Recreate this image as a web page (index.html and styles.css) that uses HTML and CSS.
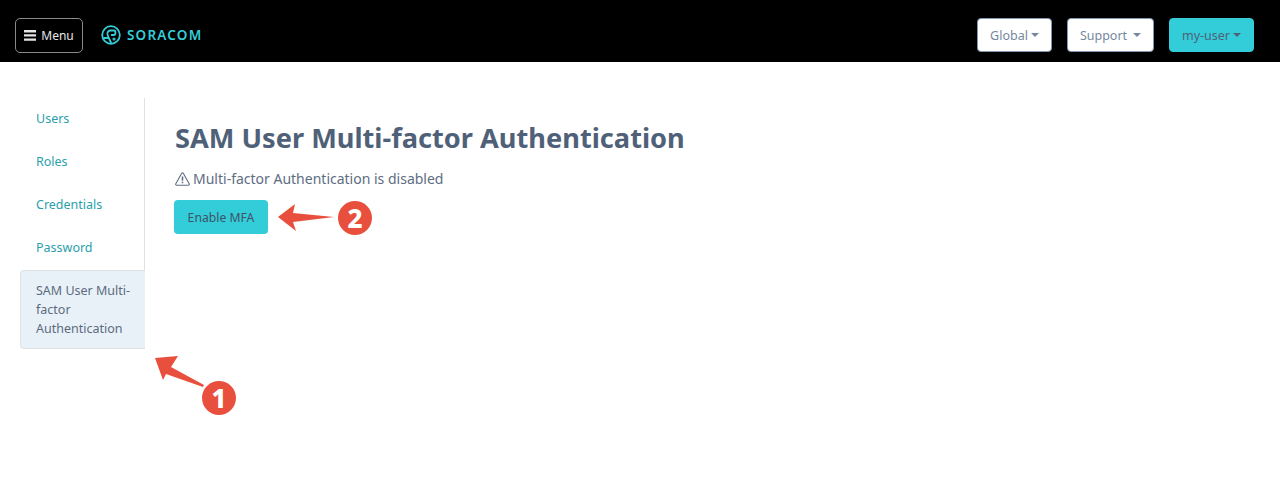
FILE: index.html
```html
<!DOCTYPE html>
<html lang="en">
<head>
    <meta charset="UTF-8">
    <title>SAM User Multi-factor Authentication</title>
    <link rel="stylesheet" href="styles.css">
</head>
<body>

<!-- Top bar -->
<header class="navbar">
    <div class="navbar-left">
        <button class="btn-menu">
            <svg class="menu-icon" width="12" height="11" viewBox="0 0 12 11"><path d="M0 0h12v2.400H0zM0 4.200h12v2.400H0zM0 8.400h12v2.400H0z" fill="#e6e6e6"/></svg>
            Menu
        </button>
        <div class="logo">
            <svg width="20" height="20" viewBox="0 0 20 20" fill="none" stroke="#33cdd9" stroke-width="1.800">
                <circle cx="10" cy="10" r="8.800"/>
                <path d="M2.500 13h5.300L6.500 9.500C6 7 7.500 5.500 9.500 5.500h3.300c2.200 0 2.200 4.500 0 4.500H10"/>
                <path d="M7.800 13l2.400 5"/>
                <circle cx="13" cy="14" r="1" stroke-width="1.200"/>
            </svg>
            <span class="logo-text">SORACOM</span>
        </div>
    </div>
    <div class="navbar-right">
        <button class="btn-nav btn-global">Global<span class="caret"></span></button>
        <button class="btn-nav btn-support">Support<span class="caret"></span></button>
        <button class="btn-nav btn-user">my-user<span class="caret"></span></button>
    </div>
</header>

<div class="layout">
    <!-- Side tabs -->
    <ul class="side-tabs">
        <li><a href="#">Users</a></li>
        <li><a href="#">Roles</a></li>
        <li><a href="#">Credentials</a></li>
        <li><a href="#">Password</a></li>
        <li class="active"><a href="#">SAM User Multi-factor Authentication</a></li>
    </ul>

    <main class="content">
        <h1>SAM User Multi-factor Authentication</h1>
        <p class="status">
            <svg width="15" height="14" viewBox="0 0 15 14" fill="none" stroke="#5d6d82" stroke-width="1.100">
                <path d="M6.600 1.400a1 1 0 0 1 1.800 0l5.800 10.300a1 1 0 0 1-.9 1.500H1.700a1 1 0 0 1-.9-1.500z" stroke-linejoin="round"/>
                <path d="M7.500 4.500v4.200M7.500 9.800v1.500" stroke-width="1.500"/>
            </svg>
            Multi-factor Authentication is disabled
        </p>
        <button class="btn-primary">Enable MFA</button>
    </main>
</div>

<!-- Annotations drawn over the page -->
<svg class="arrow arrow-one" width="50" height="32" viewBox="0 0 50 32">
    <path d="M0 3L23 1 16 12 49 30 48 32 11 19 8 25z" fill="#e94f3d"/>
</svg>
<div class="badge badge-one">1</div>
<svg class="arrow arrow-two" width="56" height="28" viewBox="0 0 56 28">
    <path d="M0 13L17 0 15 9 56 13 15 18 18 27z" fill="#e94f3d"/>
</svg>
<div class="badge badge-two">2</div>

</body>
</html>
```

FILE: styles.css
```css
* {
    margin: 0;
    padding: 0;
    box-sizing: border-box;
}

body {
    font-family: 'Noto Sans', sans-serif;
    background-color: #fff;
    color: #4f6178;
    font-size: 14px;
    position: relative;
    height: 500px;
    overflow: hidden;
}

button {
    font-family: inherit;
    cursor: pointer;
}

/* Top bar */
.navbar {
    height: 62px;
    background-color: #000;
    display: flex;
    justify-content: space-between;
    align-items: center;
    padding: 8px 26px 0 15px;
}

.navbar-left {
    display: flex;
    align-items: center;
    gap: 18px;
}

.btn-menu {
    height: 35px;
    width: 68px;
    background: none;
    border: 1px solid #8a8a8a;
    border-radius: 5px;
    color: #e6e6e6;
    font-size: 12px;
    display: flex;
    align-items: center;
    justify-content: center;
    gap: 5px;
}

.logo {
    display: flex;
    align-items: center;
    gap: 6px;
}

.logo-text {
    color: #33cdd9;
    font-size: 13.500px;
    font-weight: 600;
    letter-spacing: 1.200px;
}

.navbar-right {
    display: flex;
    gap: 15px;
}

.btn-nav {
    height: 34px;
    border: 1px solid #8497b0;
    border-radius: 4px;
    background-color: #fff;
    color: #76889f;
    font-size: 12.500px;
    display: flex;
    align-items: center;
    justify-content: center;
}

.btn-global { width: 75px; }
.btn-support { width: 87px; }
.btn-user {
    width: 85px;
    background-color: #33cdd9;
    border-color: #33cdd9;
    color: #4f6178;
}

.caret {
    width: 0;
    height: 0;
    margin-left: 3px;
    border-left: 4px solid transparent;
    border-right: 4px solid transparent;
    border-top: 4px solid currentColor;
}

.btn-support .caret {
    margin-left: 6px;
}

/* Page body */
.layout {
    display: flex;
    padding: 36px 0 0 20px;
}

.side-tabs {
    list-style: none;
    width: 125px;
    height: 251px;
    border-right: 1px solid #dee2e6;
    flex-shrink: 0;
    font-size: 12.500px;
    line-height: 19px;
}

.side-tabs li {
    margin-bottom: 4px;
    padding: 11px 16px 9px;
}

.side-tabs a {
    color: #2a9fab;
    text-decoration: none;
}

.side-tabs .active {
    background-color: #e8f1f8;
    border: 1px solid #dee2e6;
    border-right: none;
    border-radius: 4px 0 0 4px;
    margin-right: -1px;
    padding: 10px 12px 10px 15px;
    height: 79px;
}

.side-tabs .active a {
    color: #5c6b7e;
}

.content {
    padding: 21px 0 0 30px;
}

h1 {
    font-size: 27.200px;
    font-weight: 700;
    line-height: 38px;
    margin-bottom: 12px;
}

.status {
    font-size: 14px;
    line-height: 20px;
    color: #5d6d82;
    display: flex;
    align-items: center;
    gap: 3px;
    margin-bottom: 11px;
}

.btn-primary {
    height: 34px;
    width: 94px;
    margin-left: -1px;
    border: none;
    border-radius: 4px;
    background-color: #33cdd9;
    color: #3f5268;
    font-size: 12.200px;
}

/* Annotations */
.arrow {
    position: absolute;
}

.arrow-one {
    left: 155px;
    top: 355px;
}

.arrow-two {
    left: 278px;
    top: 204px;
}

.badge {
    position: absolute;
    width: 34px;
    height: 34px;
    border-radius: 50%;
    background-color: #e94f3d;
    color: #fff;
    font-size: 26px;
    font-weight: 800;
    line-height: 34px;
    text-align: center;
}

.badge-one {
    left: 202px;
    top: 381px;
}

.badge-two {
    left: 338px;
    top: 201px;
}
```
